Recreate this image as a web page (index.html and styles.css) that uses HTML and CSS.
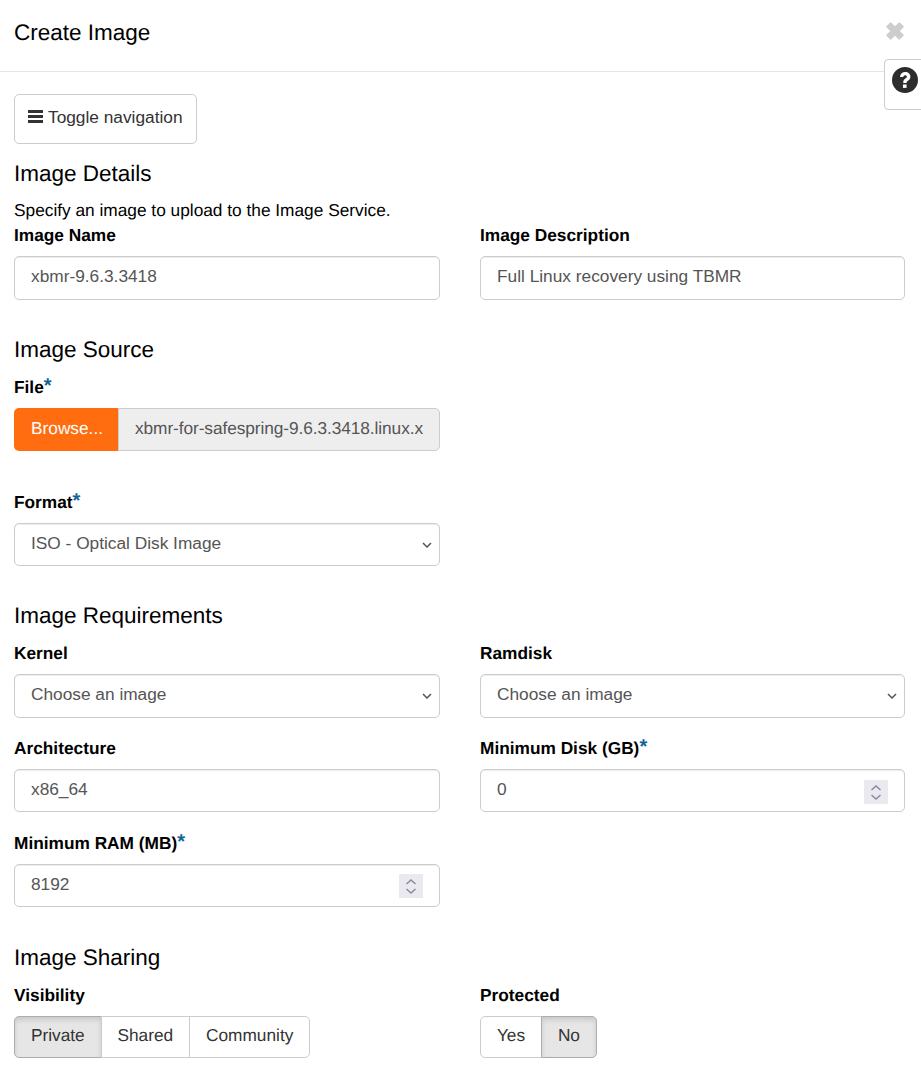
FILE: index.html
```html
<!DOCTYPE html>
<html lang="en">
<head>
    <meta charset="UTF-8">
    <meta name="viewport" content="width=device-width, initial-scale=1.0">
    <title>Create Image</title>
    <link rel="stylesheet" href="styles.css">
</head>
<body>
    <div class="modal-header">
        <h4 class="modal-title">Create Image</h4>
        <span class="close-x">
            <svg width="18" height="18" viewBox="0 0 20 20"><path d="M1 5.2 5.2 1 10 5.8 14.800 1 19 5.2 14.200 10 19 14.800 14.800 19 10 14.200 5.2 19 1 14.800 5.800 10z" stroke-width="1.500" stroke-linejoin="round"/></svg>
        </span>
    </div>
    <div class="help-tab">
        <svg width="26" height="26" viewBox="0 0 28 28"><circle cx="14" cy="14" r="14" fill="#2d2d2d"/><path d="M8.600 10.800c.3-3.500 2.600-5.300 5.600-5.300 3.100 0 5.600 2 5.600 4.900 0 2.200-1.200 3.300-2.600 4.300-1.100.8-1.500 1.200-1.500 2.400h-3.600c-.1-2.300.8-3.500 2.300-4.600 1-.7 1.600-1.200 1.600-2.100 0-1-.8-1.600-1.800-1.600-1.100 0-1.900.8-2 2z" fill="#fff"/><rect x="11.800" y="18.800" width="3.900" height="3.700" fill="#fff"/></svg>
    </div>

    <div class="modal-body">
        <button class="nav-toggle" type="button">
            <span class="bars"><i></i><i></i><i></i></span>Toggle navigation
        </button>

        <h3 class="section-title first">Image Details</h3>
        <p class="section-help">Specify an image to upload to the Image Service.</p>
        <div class="row">
            <div class="field">
                <label class="field-label">Image Name</label>
                <input class="form-control" type="text" value="xbmr-9.6.3.3418">
            </div>
            <div class="field">
                <label class="field-label">Image Description</label>
                <input class="form-control" type="text" value="Full Linux recovery using TBMR">
            </div>
        </div>

        <h3 class="section-title">Image Source</h3>
        <div class="row">
            <div class="field">
                <label class="field-label">File<span class="req">*</span></label>
                <div class="file-group">
                    <span class="file-btn">Browse...</span>
                    <span class="file-name">xbmr-for-safespring-9.6.3.3418.linux.x</span>
                </div>
            </div>
            <div class="field"></div>
        </div>
        <div class="row format-row">
            <div class="field">
                <label class="field-label">Format<span class="req">*</span></label>
                <select class="form-control"><option>ISO - Optical Disk Image</option></select>
            </div>
            <div class="field"></div>
        </div>

        <h3 class="section-title tight">Image Requirements</h3>
        <div class="row">
            <div class="field">
                <label class="field-label">Kernel</label>
                <select class="form-control"><option>Choose an image</option></select>
            </div>
            <div class="field">
                <label class="field-label">Ramdisk</label>
                <select class="form-control"><option>Choose an image</option></select>
            </div>
        </div>
        <div class="row">
            <div class="field">
                <label class="field-label">Architecture</label>
                <input class="form-control" type="text" value="x86_64">
            </div>
            <div class="field">
                <label class="field-label">Minimum Disk (GB)<span class="req">*</span></label>
                <input class="form-control" type="number" value="0">
            </div>
        </div>
        <div class="row">
            <div class="field">
                <label class="field-label">Minimum RAM (MB)<span class="req">*</span></label>
                <input class="form-control" type="number" value="8192">
            </div>
            <div class="field"></div>
        </div>

        <h3 class="section-title">Image Sharing</h3>
        <div class="row">
            <div class="field">
                <label class="field-label">Visibility</label>
                <div class="btn-group">
                    <span class="btn active">Private</span>
                    <span class="btn">Shared</span>
                    <span class="btn">Community</span>
                </div>
            </div>
            <div class="field">
                <label class="field-label">Protected</label>
                <div class="btn-group">
                    <span class="btn">Yes</span>
                    <span class="btn active">No</span>
                </div>
            </div>
        </div>
    </div>
</body>
</html>
```

FILE: styles.css
```css
html {
    overflow: hidden;
}

body {
    font-family: "Liberation Sans", Arial, sans-serif;
    font-size: 17.3px;
    line-height: 24.5px;
    color: #000;
    margin: 0;
    padding: 0;
    background-color: #fff;
    text-rendering: geometricPrecision;
}

.modal-header {
    height: 72px;
    box-sizing: border-box;
    border-bottom: 1px solid #e5e5e5;
    padding: 0 17px 5px 14px;
    display: flex;
    justify-content: space-between;
    align-items: center;
}

.modal-title {
    font-size: 22.5px;
    font-weight: 400;
    margin: 0;
}

.close-x {
    display: flex;
    margin-top: -4px;
}

.close-x svg {
    fill: #cdcdcd;
    stroke: #cdcdcd;
}

.help-tab {
    position: absolute;
    top: 59px;
    right: -1px;
    width: 38px;
    height: 51px;
    background-color: #fff;
    border: 1px solid #ccc;
    border-radius: 4px 0 0 4px;
    padding-left: 7px;
    padding-top: 7px;
    box-sizing: border-box;
}

.modal-body {
    padding: 22px 16px 0 14px;
}

.nav-toggle {
    display: flex;
    align-items: center;
    height: 50px;
    width: 183px;
    padding: 0 13px 4px;
    font-family: inherit;
    font-size: 17.3px;
    color: #333;
    background-color: #fff;
    border: 1px solid #ccc;
    border-radius: 5px;
}

.bars {
    display: flex;
    flex-direction: column;
    gap: 2px;
    width: 15px;
    margin-right: 5px;
    margin-top: -1px;
}

.bars i {
    display: block;
    height: 3px;
    background-color: #333;
}

.section-title {
    font-size: 22.5px;
    font-weight: 400;
    line-height: 28px;
    margin: 36.7px 0 10.7px;
}

.section-title.tight {
    margin-top: 36px;
    margin-bottom: 11.2px;
}

.section-title.first {
    margin-top: 16px;
    margin-bottom: 10.4px;
}

.section-help {
    margin: 0 0 0.4px;
}

.row {
    display: grid;
    grid-template-columns: 426px 425px;
    column-gap: 40px;
    margin-bottom: 18.5px;
}

.format-row {
    margin-top: 38.5px;
}

.field-label {
    display: block;
    font-weight: 700;
    margin-bottom: 8.5px;
}

.req {
    color: #0f6496;
    font-size: 20px;
    line-height: 0;
    vertical-align: 1px;
}

.form-control {
    display: block;
    width: 100%;
    height: 43.3px;
    box-sizing: border-box;
    padding: 0 16px 2px;
    font-family: inherit;
    font-size: 17.3px;
    color: #555;
    background-color: #fff;
    border: 1px solid #ccc;
    border-radius: 5px;
    box-shadow: inset 0 1px 1px rgba(0, 0, 0, 0.075);
}

select.form-control {
    appearance: none;
    padding-bottom: 3.5px;
    background-image: url("data:image/svg+xml,%3Csvg xmlns='http://www.w3.org/2000/svg' width='10' height='6'%3E%3Cpath d='M1 1l4 4 4-4' fill='none' stroke='%23555' stroke-width='1.500'/%3E%3C/svg%3E");
    background-repeat: no-repeat;
    background-position: right 7px top 18px;
}

input[type=number]::-webkit-inner-spin-button {
    -webkit-appearance: none;
    opacity: 1;
    width: 24px;
    height: 24px;
    margin-top: 4px;
    background: #e9e9ef url("data:image/svg+xml,%3Csvg xmlns='http://www.w3.org/2000/svg' width='24' height='24'%3E%3Cpath d='M7.500 10l4.500-4 4.500 4M7.500 15l4.500 4 4.500-4' fill='none' stroke='%238a8a9c' stroke-width='1.500'/%3E%3C/svg%3E") no-repeat center;
}

.file-group {
    display: flex;
    height: 43.3px;
}

.file-btn {
    width: 104px;
    flex: none;
    background-color: #ff6d10;
    color: #fff;
    padding-left: 17px;
    box-sizing: border-box;
    line-height: 41px;
    border-radius: 5px 0 0 5px;
}

.file-name {
    flex: 1;
    padding-left: 16px;
    color: #555;
    letter-spacing: -0.08px;
    line-height: 39px;
    white-space: nowrap;
    overflow: hidden;
    background-color: #eee;
    border: 1px solid #ccc;
    border-radius: 0 5px 5px 0;
}

.btn-group {
    display: inline-flex;
    height: 42px;
}

.btn {
    padding: 0 15.9px;
    line-height: 36px;
    color: #333;
    background-color: #fff;
    border: 1px solid #ccc;
    margin-left: -1px;
}

.btn:first-child {
    margin-left: 0;
    border-radius: 5px 0 0 5px;
}

.btn:last-child {
    border-radius: 0 5px 5px 0;
}

.btn.active {
    background-color: #e6e6e6;
    border-color: #adadad;
    box-shadow: inset 0 3px 5px rgba(0, 0, 0, 0.125);
}
```
